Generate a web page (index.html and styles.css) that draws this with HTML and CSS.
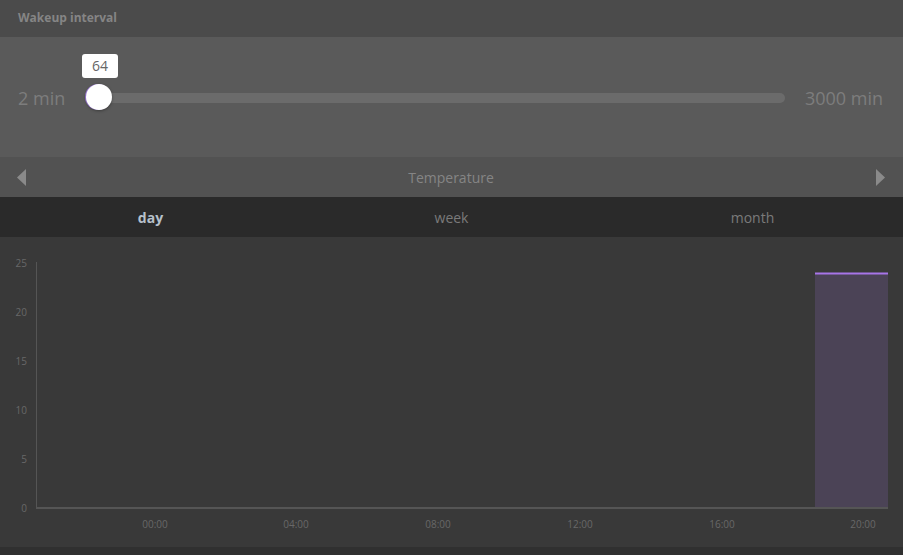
FILE: index.html
```html
<!DOCTYPE html>
<html>
<head>
<meta charset="utf-8">
<link rel="stylesheet" href="styles.css">
</head>
<body>
<div class="page">
  <div class="header">Wakeup interval</div>
  <div class="slider-area">
    <span class="min-label">2 min</span>
    <div class="track">
      <div class="thumb"><div class="tip">64</div></div>
    </div>
    <span class="max-label">3000 min</span>
  </div>
  <div class="nav">
    <svg class="arrow" width="10" height="17" viewBox="0 0 10 17"><polygon points="9,0 9,17 0,8.5" fill="#8a8a8a"/></svg>
    <span class="nav-title">Temperature</span>
    <svg class="arrow" width="10" height="17" viewBox="0 0 10 17"><polygon points="1,0 1,17 10,8.5" fill="#8a8a8a"/></svg>
  </div>
  <div class="tabs">
    <div class="tab active">day</div>
    <div class="tab">week</div>
    <div class="tab">month</div>
  </div>
  <div class="chart">
    <svg width="903" height="310" viewBox="0 237 903 310">
      <g class="ylab" text-anchor="end">
        <text x="27" y="267">25</text>
        <text x="27" y="316">20</text>
        <text x="27" y="365">15</text>
        <text x="27" y="414">10</text>
        <text x="27" y="463">5</text>
        <text x="27" y="512">0</text>
      </g>
      <rect x="815" y="273" width="73" height="235" fill="#4b4356"/>
      <line x1="815" y1="273.5" x2="888" y2="273.5" stroke="#a775e8" stroke-width="2"/>
      <line x1="36.5" y1="262" x2="36.5" y2="508" stroke="#555" stroke-width="1"/>
      <line x1="36" y1="508" x2="888" y2="508" stroke="#555" stroke-width="2"/>
      <g class="xlab" text-anchor="middle">
        <text x="155" y="528">00:00</text>
        <text x="296" y="528">04:00</text>
        <text x="438" y="528">08:00</text>
        <text x="580" y="528">12:00</text>
        <text x="722" y="528">16:00</text>
        <text x="863" y="528">20:00</text>
      </g>
    </svg>
  </div>
  <div class="footer"></div>
</div>
</body>
</html>
```
FILE: styles.css
```css
html, body {
  margin: 0;
  padding: 0;
}
body {
  width: 903px;
  height: 555px;
  overflow: hidden;
  background: #303030;
  font-family: "Open Sans", "Noto Sans", sans-serif;
}
.page {
  display: flex;
  flex-direction: column;
}
.header {
  height: 37px;
  background: #4b4b4b;
  color: #858585;
  font-weight: bold;
  font-size: 12px;
  line-height: 35px;
  padding-left: 18px;
  box-sizing: border-box;
}
.slider-area {
  height: 120px;
  background: #5a5a5a;
  display: flex;
  align-items: center;
  padding: 1px 20px 0 18px;
  box-sizing: border-box;
}
.min-label, .max-label {
  color: #7d7d7d;
  font-size: 18px;
  line-height: 20px;
}
.min-label {
  width: 72px;
}
.max-label {
  margin-left: 20px;
}
.track {
  flex: 1;
  height: 10px;
  border-radius: 5px;
  background: #6b6b6b;
  position: relative;
}
.thumb {
  position: absolute;
  left: -4px;
  top: -9px;
  width: 26px;
  height: 26px;
  border-radius: 50%;
  background: #fff;
  box-shadow: 0 1px 3px rgba(0,0,0,0.35), -1px 0 0 #a07ae0;
}
.tip {
  position: absolute;
  left: -4px;
  top: -30px;
  width: 36px;
  height: 24px;
  background: #fff;
  border-radius: 3px;
  color: #666;
  font-size: 14px;
  line-height: 24px;
  text-align: center;
}
.nav {
  height: 40px;
  background: #525252;
  display: flex;
  align-items: center;
  justify-content: space-between;
  padding: 0 18px 0 17px;
}
.nav-title {
  color: #858585;
  font-size: 14px;
}
.tabs {
  height: 40px;
  background: #2a2a2a;
  display: grid;
  grid-template-columns: 1fr 1fr 1fr;
  align-items: center;
}
.tab {
  text-align: center;
  color: #7a7a7a;
  font-size: 14px;
}
.tab.active {
  color: #b6c0cb;
  font-weight: bold;
}
.chart {
  height: 310px;
  background: #393939;
}
.chart svg {
  display: block;
}
.ylab text, .xlab text {
  fill: #686868;
  font-size: 10px;
  font-family: "Open Sans", "Noto Sans", sans-serif;
}
.footer {
  height: 8px;
  background: #303030;
}
```
